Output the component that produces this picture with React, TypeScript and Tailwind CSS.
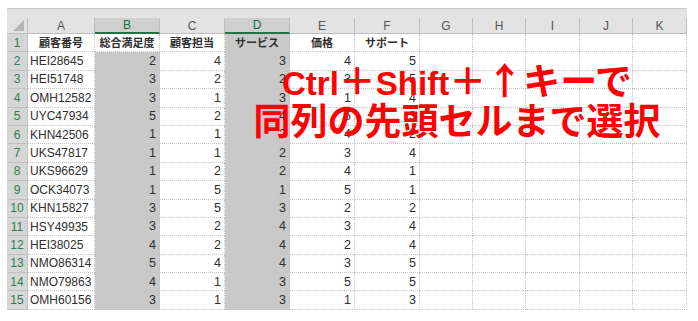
import React from "react";

type Col = { l: string; sel?: boolean };
const cols: Col[] = [
  { l: "A" },
  { l: "B", sel: true },
  { l: "C" },
  { l: "D", sel: true },
  { l: "E" },
  { l: "F" },
  { l: "G" },
  { l: "H" },
  { l: "I" },
  { l: "J" },
  { l: "K" },
];

const heads = ["顧客番号", "総合満足度", "顧客担当", "サービス", "価格", "サポート"];

const rows: (string | number)[][] = [
  ["HEI28645", 2, 4, 3, 4, 5],
  ["HEI51748", 3, 2, 2, 3, 5],
  ["OMH12582", 3, 1, 3, 1, 4],
  ["UYC47934", 5, 2, 4, 5, 3],
  ["KHN42506", 1, 1, 2, 4, 2],
  ["UKS47817", 1, 1, 2, 3, 4],
  ["UKS96629", 1, 2, 2, 4, 1],
  ["OCK34073", 1, 5, 1, 5, 1],
  ["KHN15827", 3, 5, 3, 2, 2],
  ["HSY49935", 3, 2, 4, 3, 4],
  ["HEI38025", 4, 2, 4, 2, 4],
  ["NMO86314", 5, 4, 4, 3, 5],
  ["NMO79863", 4, 1, 3, 5, 5],
  ["OMH60156", 3, 1, 3, 1, 3],
];

const cellBase = "border-r border-b border-dotted border-[#c4c4c4] flex items-center overflow-hidden whitespace-nowrap";

export default function App() {
  return (
    <div className="relative w-[698px] h-[321px] bg-white pt-[8px] pl-[7px] font-['Noto_Sans_CJK_JP','Liberation_Sans',sans-serif] text-[#2e2e2e]">
      <div className="grid grid-cols-[21px_67px_65px_65px_65px_65px_65px_53px_53px_54px_53px_54px] grid-rows-[10px_16px_repeat(15,18.4px)] w-[680px]">
        {/* top strip */}
        <div className="col-span-12 bg-[#e3e3e3] border-t border-[#c8c8c8]" />
        {/* corner */}
        <div className="bg-[#e3e3e3] border-b border-r border-[#bdbdbd] flex items-end justify-end pr-[3px] pb-[2px]">
          <svg width="11" height="11" viewBox="0 0 11 11">
            <polygon points="11,0 11,11 0,11" fill="#b5b5b5" />
          </svg>
        </div>
        {cols.map((c) => (
          <div
            key={c.l}
            className={
              c.sel
                ? "bg-[#cfcfcf] border-r border-r-[#bdbdbd] border-b-2 border-b-[#217346] flex items-center justify-center text-[12px] text-[#1e6b40] leading-none"
                : "bg-[#e3e3e3] border-r border-r-[#bdbdbd] border-b border-b-[#bdbdbd] flex items-center justify-center text-[12px] text-[#555] leading-none"
            }
          >
            <span className="font-['Liberation_Sans',sans-serif]">{c.l}</span>
          </div>
        ))}

        {/* row 1 */}
        <div className="bg-[#d6d6d6] border-b border-r border-[#c0c0c0] flex items-center justify-center text-[12px] text-[#2f7d52] leading-none font-['Liberation_Sans',sans-serif]">
          1
        </div>
        {cols.map((c, i) => {
          const bg = c.l === "D" ? "bg-[#c9c9c9]" : "bg-white";
          return (
            <div key={c.l} className={`${cellBase} ${bg} justify-center text-[11px] font-bold leading-none`}>
              {heads[i] ?? ""}
            </div>
          );
        })}

        {rows.map((r, ri) => (
          <React.Fragment key={ri}>
            <div className="bg-[#d6d6d6] border-b border-r border-[#c0c0c0] flex items-center justify-center text-[12px] text-[#2f7d52] leading-none font-['Liberation_Sans',sans-serif]">
              {ri + 2}
            </div>
            {cols.map((c, ci) => {
              const v = r[ci];
              const bg = c.sel ? "bg-[#c9c9c9]" : "bg-white";
              if (ci === 0) {
                return (
                  <div key={c.l} className={`${cellBase} ${bg} justify-start pl-[2px] text-[12px] leading-none font-['Liberation_Sans',sans-serif]`}>
                    {v}
                  </div>
                );
              }
              return (
                <div key={c.l} className={`${cellBase} ${bg} justify-end pr-[3px] text-[12.5px] leading-none font-['Liberation_Sans',sans-serif]`}>
                  {v ?? ""}
                </div>
              );
            })}
          </React.Fragment>
        ))}
      </div>

      {/* overlay annotation */}
      <div className="absolute top-[62px] left-[257px] w-[400px] flex flex-col items-center text-[#ff0000] whitespace-nowrap">
        <div className="h-[35px] leading-[35px] text-[33px] font-bold flex items-baseline">
          <span className="font-['Liberation_Sans',sans-serif]">Ctrl</span>
          <span className="text-[37px] font-['Noto_Sans_CJK_JP',sans-serif]">＋</span>
          <span className="font-['Liberation_Sans',sans-serif]">Shift</span>
          <span className="text-[37px] font-['Noto_Sans_CJK_JP',sans-serif]">＋↑キーで</span>
        </div>
        <div className="mt-[4px] h-[37px] leading-[37px] text-[37px] font-bold font-['Noto_Sans_CJK_JP',sans-serif]">
          同列の先頭セルまで選択
        </div>
      </div>
    </div>
  );
}
